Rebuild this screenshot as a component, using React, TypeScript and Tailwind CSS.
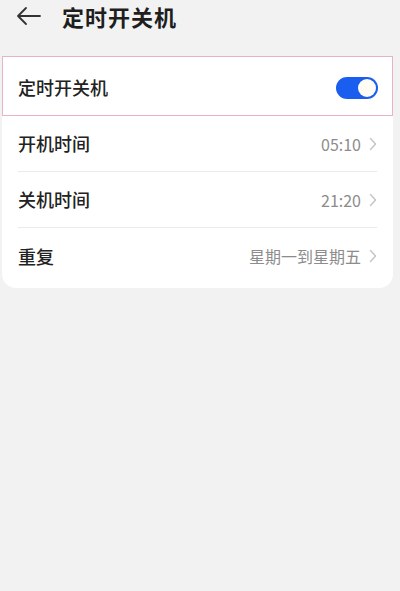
import React from "react";

const font = { fontFamily: '"Noto Sans CJK SC", "Noto Sans", sans-serif' };

function Chevron() {
  return (
    <svg width="8" height="14" viewBox="0 0 8 14" fill="none" className="ml-[8px]">
      <path d="M1.5 1.5 L6.5 7 L1.5 12.5" stroke="#c4c4c4" strokeWidth="1.4" strokeLinecap="round" strokeLinejoin="round" />
    </svg>
  );
}

function Row({ label, value, last }: { label: string; value: string; last?: boolean }) {
  return (
    <div className="px-[16px]">
      <div className={`flex items-center justify-between h-[56px] ${last ? "" : "border-b border-[#ebebeb]"}`}>
        <span className="text-[18px] text-[#222] font-medium">{label}</span>
        <div className="flex items-center">
          <span className="text-[16px] text-[#8c8c8c]">{value}</span>
          <Chevron />
        </div>
      </div>
    </div>
  );
}

export default function App() {
  return (
    <div className="w-[400px] h-[591px] bg-[#f2f2f2] overflow-hidden" style={font}>
      {/* header */}
      <div className="h-[56px] flex items-start">
        <div className="flex items-center h-[32px]">
          <svg width="26" height="20" viewBox="0 0 26 20" fill="none" className="ml-[16px]">
            <path d="M24 10 H2 M10 2 L2 10 L10 18" stroke="#333" strokeWidth="1.8" strokeLinecap="round" strokeLinejoin="round" />
          </svg>
          <span className="ml-[20px] text-[22px] font-bold text-[#1e1e1e] tracking-[1px]">定时开关机</span>
        </div>
      </div>

      {/* settings card */}
      <div className="mx-[2px] w-[391px] bg-white rounded-b-[14px]">
        <div className="h-[60px] border-[1.5px] border-[#eab3c4] flex items-center justify-between pl-[15px] pr-[14px] pt-[3px]">
          <span className="text-[18px] text-[#222] font-medium">定时开关机</span>
          <div className="w-[42px] h-[22px] rounded-full bg-[#1a5ef0] flex items-center justify-end pr-[2px]">
            <div className="w-[18px] h-[18px] rounded-full bg-[#fffdf3]" />
          </div>
        </div>
        <Row label="开机时间" value="05:10" />
        <Row label="关机时间" value="21:20" />
        <Row label="重复" value="星期一到星期五" last />
        <div className="h-[4px]" />
      </div>
    </div>
  );
}
